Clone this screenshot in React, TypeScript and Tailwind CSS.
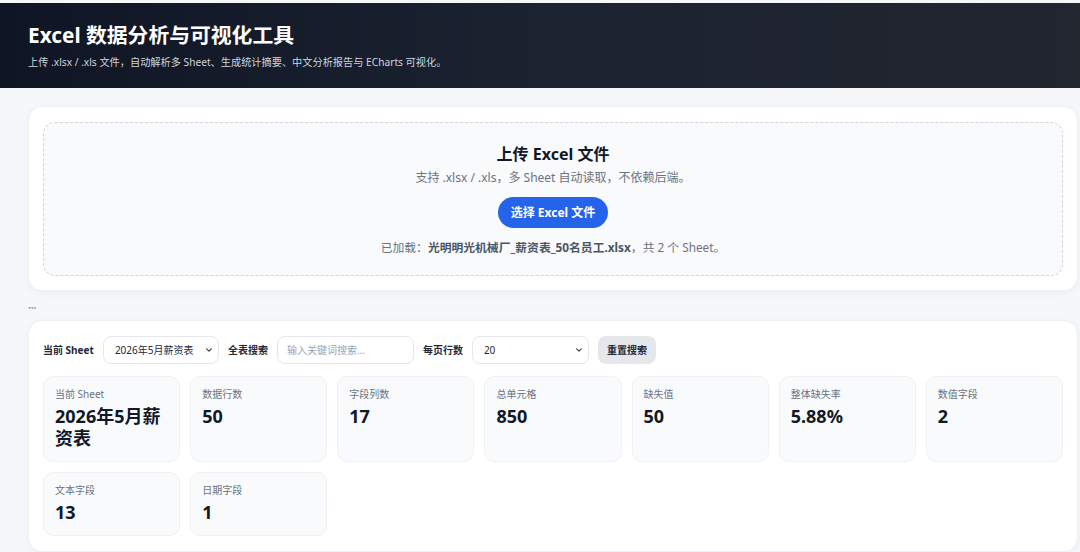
import React from "react";

const FONT = { fontFamily: '"Noto Sans", "Noto Sans CJK SC", sans-serif' };

function Chevron() {
  return (
    <svg width="8" height="8" viewBox="0 0 10 10" className="pointer-events-none absolute right-[5px] top-1/2 -translate-y-1/2">
      <path d="M2 3.5 L5 6.5 L8 3.5" fill="none" stroke="#374151" strokeWidth="1.4" strokeLinecap="round" strokeLinejoin="round" />
    </svg>
  );
}

function FakeSelect({ value, width }: { value: string; width: string }) {
  return (
    <div className={`relative h-[28px] ${width} rounded-[8px] border border-[#e5e7eb] bg-white`}>
      <div className="flex h-full items-center pl-[11px] text-[10px] text-[#1f2937]">{value}</div>
      <Chevron />
    </div>
  );
}

const stats: { label: string; value: string }[] = [
  { label: "当前 Sheet", value: "2026年5月薪资表" },
  { label: "数据行数", value: "50" },
  { label: "字段列数", value: "17" },
  { label: "总单元格", value: "850" },
  { label: "缺失值", value: "50" },
  { label: "整体缺失率", value: "5.88%" },
  { label: "数值字段", value: "2" },
  { label: "文本字段", value: "13" },
  { label: "日期字段", value: "1" },
];

export default function App() {
  return (
    <div style={FONT} className="h-[552px] w-[1080px] overflow-hidden bg-[#f6f7f9] pt-[3px]">
      <header className="flex h-[85px] flex-col justify-center bg-linear-to-r from-[#0f1524] via-[#1b2230] to-[#22262f] px-[28px]">
        <h1 className="text-[20.8px] font-bold leading-[28px] text-white">Excel 数据分析与可视化工具</h1>
        <p className="mt-[5px] text-[10.2px] leading-[16px] text-[#d1d5db]">
          上传 .xlsx / .xls 文件，自动解析多 Sheet、生成统计摘要、中文分析报告与 ECharts 可视化。
        </p>
      </header>

      <section className="ml-[28px] mt-[18px] w-[1050px] rounded-[14px] border border-[#eef0f3] bg-white px-[14px] pb-[14px] pt-[15px] shadow-[0_2px_8px_rgba(15,23,42,0.04)]">
        <div className="flex flex-col items-center rounded-[12px] border border-dashed border-[#cfd5de] bg-[#f9fafc] pb-[19px] pt-[19px]">
          <h2 className="text-[16px] font-bold leading-[24px] text-[#111827]">上传 Excel 文件</h2>
          <p className="mt-[3px] text-[12px] leading-[18px] text-[#6b7280]">
            支持 .xlsx / .xls，多 Sheet 自动读取，不依赖后端。
          </p>
          <button className="mt-[10px] h-[31px] rounded-full bg-[#2563eb] px-[13px] text-[12px] font-bold text-white">
            选择 Excel 文件
          </button>
          <p className="mt-[10px] text-[11.8px] leading-[18px] text-[#6b7280]">
            已加载：<strong className="font-bold text-[#4b5563]">光明明光机械厂_薪资表_50名员工.xlsx</strong>，共 2 个 Sheet。
          </p>
        </div>
      </section>

      <div className="ml-[28px] mt-[14px] text-[10px] leading-[14px] text-[#6b7280]">```</div>

      <section className="ml-[28px] mt-[1px] w-[1050px] rounded-[14px] border border-[#eef0f3] bg-white px-[14px] pb-[15px] pt-[15px] shadow-[0_2px_8px_rgba(15,23,42,0.04)]">
        <div className="flex items-center gap-[9px]">
          <span className="text-[10px] font-bold text-[#1f2937]">当前 Sheet</span>
          <FakeSelect value="2026年5月薪资表" width="w-[116px]" />
          <span className="text-[10px] font-bold text-[#1f2937]">全表搜索</span>
          <div className="flex h-[28px] w-[137px] items-center rounded-[8px] border border-[#e5e7eb] bg-white pl-[9px] text-[10px] text-[#9ca3af]">
            输入关键词搜索...
          </div>
          <span className="text-[10px] font-bold text-[#1f2937]">每页行数</span>
          <FakeSelect value="20" width="w-[117px]" />
          <button className="h-[28px] rounded-[8px] bg-[#e5e7eb] px-[9px] text-[10px] font-bold text-[#1f2937]">
            重置搜索
          </button>
        </div>

        <div className="mt-[12px] grid grid-cols-7 gap-x-[10px] gap-y-[10px]">
          {stats.map((s) => (
            <div key={s.label} className="rounded-[10px] border border-[#eef1f5] bg-[#f9fafc] px-[11px] pb-[12px] pt-[10px]">
              <div className="text-[10px] leading-[14px] text-[#6b7280]">{s.label}</div>
              <div className="mt-[4px] text-[18px] font-bold leading-[22px] text-[#111827]">{s.value}</div>
            </div>
          ))}
        </div>
      </section>
    </div>
  );
}
